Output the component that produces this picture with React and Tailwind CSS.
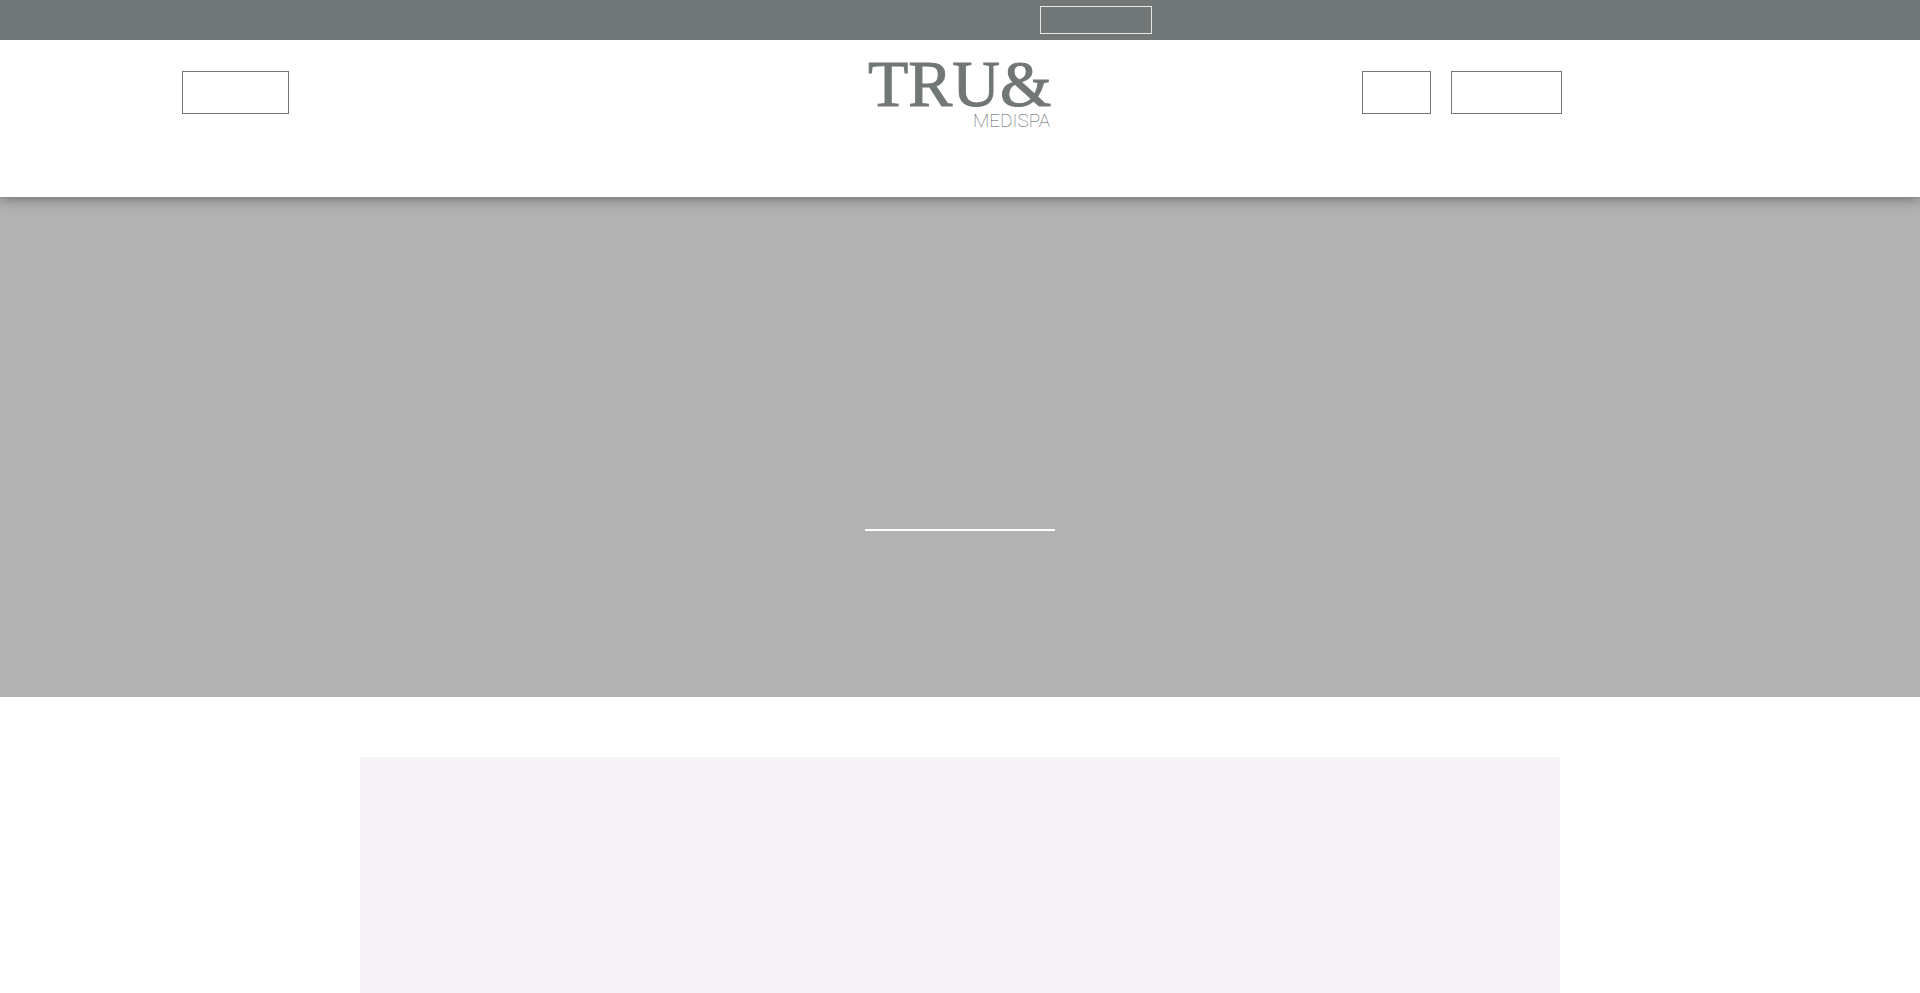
import React from 'react';

function Logo(){
  return (
    <svg viewBox="0 0 188 88" className="w-[188px] h-[88px] overflow-visible fill-[#717776]" role="img" aria-label="TRU& Medispa">
      <text x="2" y="58" className="font-['Liberation_Serif',serif] text-[66px] stroke-[#717776]" strokeWidth="1">TRU&amp;</text>
      <text x="107" y="79" className="font-['Roboto',sans-serif] text-[19px] font-thin fill-[#555a59]">MEDISPA</text>
    </svg>
  );
}

export default function App(){
  return (
    <div className="min-h-screen bg-white">
      <div className="relative z-20 h-10 bg-[#717776] flex items-center justify-center pl-[272px]">
        <button aria-label="Book now" className="w-28 h-7 border border-[#e4e6e5]"></button>
      </div>

      <header className="relative z-10 h-[157px] bg-white shadow-[0_0_14px_rgba(0,0,0,0.5)] grid grid-cols-[1fr_auto_1fr] items-start pt-2">
        <div className="pl-[182px] pt-[23px]">
          <button aria-label="Menu" className="block w-[107px] h-[43px] border border-[#717776]"></button>
        </div>
        <a href="#" className="block"><Logo /></a>
        <div className="flex justify-end gap-5 pr-[358px] pt-[23px]">
          <button aria-label="Call" className="w-[69px] h-[43px] border border-[#717776]"></button>
          <button aria-label="Contact" className="w-[111px] h-[43px] border border-[#717776]"></button>
        </div>
      </header>

      <section className="h-[500px] bg-[#b2b2b2] flex flex-col items-center pt-[332px]">
        <hr className="w-[190px] border-t-2 border-white" />
      </section>

      <main className="max-w-[1200px] mx-auto pt-[60px]">
        <div className="h-[236px] bg-[#f5f3f6]"></div>
      </main>
    </div>
  );
}
